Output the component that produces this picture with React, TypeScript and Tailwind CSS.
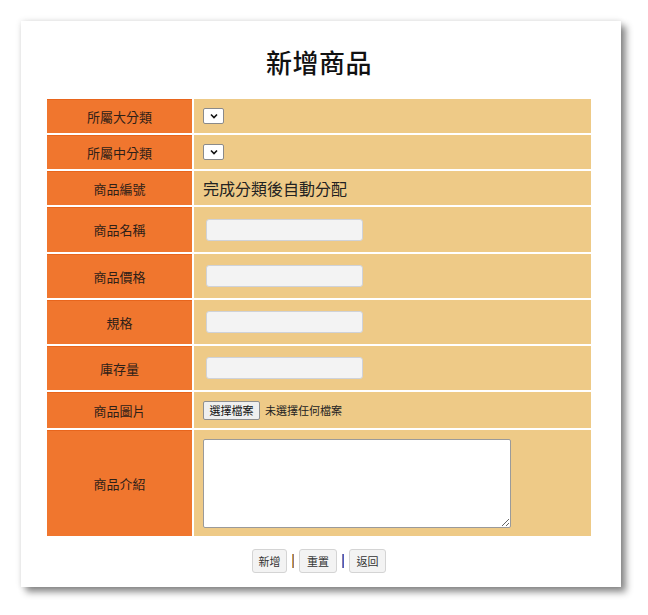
import React from "react";

const FONT = { fontFamily: '"Noto Sans CJK TC", "Noto Sans", "Liberation Sans", sans-serif' };

function Label({ children }: { children: React.ReactNode }) {
  return (
    <div className="bg-[#f0762e] border-t border-[#e8651c] flex items-center justify-center text-[13px] text-[#2e2018]">
      {children}
    </div>
  );
}

function Cell({ children }: { children?: React.ReactNode }) {
  return <div className="bg-[#eeca87] flex items-center pl-[9px]">{children}</div>;
}

function FakeSelect() {
  return (
    <div className="w-[21px] h-[16px] bg-white border border-[#8a8a8a] rounded-[2px] flex items-center justify-center">
      <svg width="8" height="6" viewBox="0 0 8 6">
        <polyline points="1,1.5 4,4.5 7,1.5" fill="none" stroke="#111" strokeWidth="1.6" />
      </svg>
    </div>
  );
}

function TextInput() {
  return (
    <input
      type="text"
      className="ml-[3px] w-[157px] h-[22px] bg-[#f3f3f3] border border-[#cfd2d8] rounded-[3px] outline-none"
    />
  );
}

export default function App() {
  return (
    <div className="bg-white w-[648px] h-[615px] pt-[21px] pl-[21px]" style={FONT}>
      <div className="w-[600px] h-[566px] bg-white shadow-[0_0_6px_rgba(0,0,0,0.12),5px_5px_7px_rgba(0,0,0,0.45)] pl-[26px]">
        <div className="w-[544px] flex flex-col items-center">
          <div className="h-[78px] w-full flex items-center justify-center pt-[3px]">
            <h1 className="text-[26px] font-medium text-[#111] tracking-[0.5px]">新增商品</h1>
          </div>
          <div className="grid grid-cols-[145px_397px] grid-rows-[34px_34px_34px_45px_44px_44px_44px_36px_106px] gap-[2px] w-[544px]">
            <Label>所屬大分類</Label>
            <Cell>
              <FakeSelect />
            </Cell>
            <Label>所屬中分類</Label>
            <Cell>
              <FakeSelect />
            </Cell>
            <Label>商品編號</Label>
            <Cell>
              <span className="text-[16px] text-[#222]">完成分類後自動分配</span>
            </Cell>
            <Label>商品名稱</Label>
            <Cell>
              <TextInput />
            </Cell>
            <Label>商品價格</Label>
            <Cell>
              <TextInput />
            </Cell>
            <Label>規格</Label>
            <Cell>
              <TextInput />
            </Cell>
            <Label>庫存量</Label>
            <Cell>
              <TextInput />
            </Cell>
            <Label>商品圖片</Label>
            <Cell>
              <div className="flex items-center gap-[5px]">
                <button className="w-[57px] h-[19px] bg-[#efefef] border border-[#8f8f8f] rounded-[2px] text-[11px] leading-none text-[#111] flex items-center justify-center">
                  選擇檔案
                </button>
                <span className="text-[11px] text-[#222]">未選擇任何檔案</span>
              </div>
            </Cell>
            <Label>商品介紹</Label>
            <Cell>
              <textarea className="w-[308px] h-[89px] bg-white border border-[#9a9a9a] rounded-[2px] outline-none" />
            </Cell>
          </div>
          <div className="mt-[13px] flex items-center gap-[5px]">
            <button className="w-[35px] h-[24px] bg-[#f3f3f3] border border-[#d4d4d4] rounded-[3px] text-[11px] text-[#333] flex items-center justify-center">
              新增
            </button>
            <span className="w-[2px] h-[14px] flex">
              <span className="w-px h-full bg-[#d49a3c]" />
              <span className="w-px h-full bg-[#8a7a90]" />
            </span>
            <button className="w-[38px] h-[24px] bg-[#f3f3f3] border border-[#d4d4d4] rounded-[3px] text-[11px] text-[#333] flex items-center justify-center">
              重置
            </button>
            <span className="w-[2px] h-[14px] flex">
              <span className="w-px h-full bg-[#8a78a8]" />
              <span className="w-px h-full bg-[#4a5cc0]" />
            </span>
            <button className="w-[37px] h-[24px] bg-[#f3f3f3] border border-[#d4d4d4] rounded-[3px] text-[11px] text-[#333] flex items-center justify-center">
              返回
            </button>
          </div>
        </div>
      </div>
    </div>
  );
}
